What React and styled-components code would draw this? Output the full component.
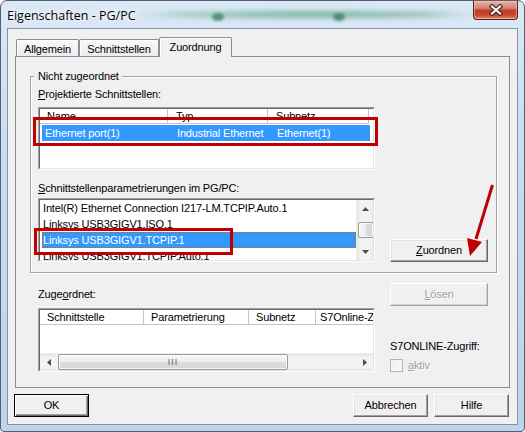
import React from "react";
import styled, { createGlobalStyle } from "styled-components";

const GlobalStyle = createGlobalStyle`
  html, body { margin: 0; padding: 0; background: #ffffff; }
  body {
    width: 525px;
    height: 432px;
    overflow: hidden;
    font-family: "Liberation Sans", Arial, sans-serif;
    font-size: 11px;
    letter-spacing: -0.15px;
    color: #000;
  }
  * { box-sizing: border-box; }
`;

const Stage = styled.div`
  position: relative;
  width: 525px;
  height: 432px;
`;

const Window = styled.div`
  width: 525px;
  height: 432px;
  border: 1px solid #53606f;
  border-radius: 7px 7px 4px 4px;
  background: linear-gradient(180deg, #dbe8f6 0%, #cadcf0 35%, #bed4ec 100%);
  display: flex;
  flex-direction: column;
  overflow: hidden;
`;

const TitleBar = styled.div`
  position: relative;
  height: 27px;
  flex: none;
  display: flex;
  align-items: flex-start;
  padding: 0 6px;
`;

const Glow = styled.span`
  position: absolute;
  left: ${(p) => p.$x}px;
  top: ${(p) => p.$y}px;
  width: ${(p) => p.$w}px;
  height: ${(p) => p.$h}px;
  border-radius: 50%;
  background: ${(p) => p.$bg};
  filter: blur(${(p) => p.$blur}px);
`;

const Title = styled.div`
  position: relative;
  padding-top: 6px;
  line-height: 17px;
  font-family: "Open Sans", "Liberation Sans", sans-serif;
  font-size: 12.5px;
  letter-spacing: 0;
  color: #000;
  text-shadow: 0 0 6px #fff, 0 0 10px #fff;
`;

const CloseButton = styled.div`
  margin-left: auto;
  width: 45px;
  height: 19px;
  display: flex;
  align-items: center;
  justify-content: center;
  border: 1px solid #5e2015;
  border-top: none;
  border-radius: 0 0 4px 4px;
  background: linear-gradient(
    180deg,
    #eab0a3 0%,
    #d98272 40%,
    #c43c24 52%,
    #c9462b 78%,
    #e08b6b 100%
  );
  box-shadow: inset 0 0 0 1px rgba(255, 220, 210, 0.45);
`;

const Client = styled.div`
  flex: 1;
  margin: 0 6px 6px 6px;
  border: 1px solid #8295aa;
  background: #f0f0f0;
  display: flex;
  flex-direction: column;
  padding: 8px 8px 0 6px;
`;

const TabStrip = styled.div`
  position: relative;
  z-index: 1;
  height: 20px;
  margin-bottom: -1px;
  display: flex;
  align-items: flex-end;
  padding-left: 2px;
`;

const Tab = styled.div`
  width: ${(p) => p.$w}px;
  height: ${(p) => (p.$active ? 20 : 17)}px;
  margin-bottom: ${(p) => (p.$active ? 0 : 1)}px;
  border: 1px solid #898c95;
  border-bottom: none;
  border-radius: 2px 2px 0 0;
  background: ${(p) =>
    p.$active ? "#f0f0f0" : "linear-gradient(180deg, #f8f8f8 0%, #ececec 100%)"};
  box-shadow: inset 1px 1px 0 #ffffff;
  text-align: center;
  padding-top: 3px;
  line-height: 13px;
  white-space: nowrap;
`;

const Panel = styled.div`
  height: 332px;
  margin: 0 -1px 0 1px;
  border: 1px solid #898c95;
  background: #f0f0f0;
  padding: 19px 12px 0 14px;
  display: flex;
  flex-direction: column;
`;

const GroupBox = styled.div`
  position: relative;
  border: 1px solid #a0a0a0;
  box-shadow: 1px 1px 0 #ffffff, inset 1px 1px 0 #ffffff;
  padding: 11px 8px 10px 7px;
  display: flex;
  flex-direction: column;
`;

const Legend = styled.div`
  position: absolute;
  left: 3px;
  top: -7px;
  padding: 0 3px 0 4px;
  line-height: 13px;
  background: #f0f0f0;
`;

const Label = styled.div`
  line-height: 13px;
  height: 13px;
  white-space: nowrap;
  margin-top: ${(p) => p.$mt || 0}px;
  color: ${(p) => (p.$disabled ? "#a0a0a0" : "#000")};
  text-shadow: ${(p) => (p.$disabled ? "1px 1px 0 #fff" : "none")};
`;

const Key = styled.span`
  text-decoration: underline;
`;

const Sunken = styled.div`
  width: 337px;
  height: ${(p) => p.$h}px;
  margin-top: ${(p) => p.$mt || 0}px;
  flex: none;
  border: 1px solid;
  border-color: #a0a0a0 #ffffff #ffffff #a0a0a0;
`;

const SunkenInner = styled.div`
  height: 100%;
  border: 1px solid;
  border-color: #696969 #e3e3e3 #e3e3e3 #696969;
  background: #ffffff;
  overflow: hidden;
  display: flex;
  flex-direction: ${(p) => (p.$row ? "row" : "column")};
`;

const HeaderRow = styled.div`
  display: flex;
  height: 15px;
  flex: none;
`;

const HeaderCell = styled.div`
  width: ${(p) => p.$w}px;
  flex: none;
  padding-left: ${(p) => p.$pad ?? 7}px;
  line-height: 14px;
  border-right: 1px solid #c5c5c5;
  border-bottom: 1px solid #c5c5c5;
  white-space: nowrap;
  overflow: hidden;
`;

const ItemRow = styled.div`
  display: flex;
  height: 16px;
  flex: none;
  width: ${(p) => (p.$w ? `${p.$w}px` : "auto")};
  margin: ${(p) => p.$mt || 0}px 0 0 2px;
  line-height: 16px;
  background: ${(p) => (p.$selected ? "#3399ff" : "transparent")};
  color: ${(p) => (p.$selected ? "#ffffff" : "#000000")};
  outline: ${(p) => (p.$focus ? "1px dotted #cc6600" : "none")};
  outline-offset: -1px;
  white-space: nowrap;
`;

const ItemCell = styled.div`
  width: ${(p) => (p.$w ? `${p.$w}px` : "auto")};
  flex: none;
  padding-left: ${(p) => p.$pad ?? 8}px;
  overflow: hidden;
`;

const Items = styled.div`
  flex: 1;
  display: flex;
  flex-direction: column;
  overflow: hidden;
`;

const EmptyBody = styled.div`
  flex: 1;
`;

const VScroll = styled.div`
  width: 17px;
  flex: none;
  display: flex;
  flex-direction: column;
  background: linear-gradient(90deg, #e6e6e6 0%, #f3f3f3 25%, #f3f3f3 75%, #ececec 100%);
  border-left: 1px solid #ececec;
`;

const HScroll = styled.div`
  height: 17px;
  flex: none;
  display: flex;
  background: linear-gradient(180deg, #e6e6e6 0%, #f3f3f3 25%, #f3f3f3 75%, #ececec 100%);
  border-top: 1px solid #ececec;
`;

const ArrowBox = styled.div`
  flex: none;
  display: flex;
  align-items: center;
  justify-content: center;
  ${(p) => (p.$h ? "width: 17px;" : "height: 17px;")}
`;

const Track = styled.div`
  flex: 1;
  display: flex;
  flex-direction: ${(p) => (p.$h ? "row" : "column")};
`;

const Thumb = styled.div`
  flex: none;
  ${(p) =>
    p.$h
      ? `width: ${p.$len}px; margin-left: ${p.$off}px; height: 100%;`
      : `height: ${p.$len}px; margin-top: ${p.$off}px; width: 100%; margin-left: 1px;`}
  border: 1px solid #9a9a9a;
  border-radius: 2px;
  background: ${(p) =>
    p.$h
      ? "linear-gradient(180deg, #f6f6f6 0%, #ececec 50%, #dcdcdc 51%, #d6d6d6 100%)"
      : "linear-gradient(90deg, #f6f6f6 0%, #ececec 50%, #dcdcdc 51%, #d6d6d6 100%)"};
  box-shadow: inset 0 0 0 1px rgba(255, 255, 255, 0.8);
  display: flex;
  align-items: center;
  justify-content: center;
`;

const Grip = styled.span`
  font-size: 9px;
  letter-spacing: 1px;
  color: #606060;
  line-height: 9px;
`;

const Row = styled.div`
  display: flex;
  margin-top: ${(p) => p.$mt || 0}px;
`;

const Column = styled.div`
  display: flex;
  flex-direction: column;
  width: ${(p) => p.$w}px;
  flex: none;
  margin-left: ${(p) => p.$ml || 0}px;
`;

const Button = styled.div`
  width: ${(p) => p.$w || 75}px;
  height: 23px;
  flex: none;
  margin-top: ${(p) => p.$mt || 0}px;
  margin-left: ${(p) => (p.$push ? "auto" : "0")};
  align-self: ${(p) => p.$align || "auto"};
  border: 1px solid;
  border-color: ${(p) =>
    p.$default ? "#000000" : p.$disabled ? "#ffffff #a0a0a0 #a0a0a0 #ffffff" : "#ffffff #696969 #696969 #ffffff"};
  box-shadow: ${(p) =>
    p.$default
      ? "inset 1px 1px 0 #ffffff, inset -1px -1px 0 #696969, inset -2px -2px 0 #a0a0a0"
      : p.$disabled
      ? "inset -1px -1px 0 #d4d4d4"
      : "inset -1px -1px 0 #a0a0a0, inset 1px 1px 0 #e3e3e3"};
  background: #f0f0f0;
  display: flex;
  align-items: center;
  justify-content: center;
  line-height: 13px;
  color: ${(p) => (p.$disabled ? "#a0a0a0" : "#000")};
  text-shadow: ${(p) => (p.$disabled ? "1px 1px 0 #ffffff" : "none")};
`;

const ButtonRow = styled.div`
  display: flex;
  gap: 6px;
  margin-top: 6px;
`;

const CheckRow = styled.div`
  display: flex;
  align-items: center;
  gap: 5px;
  margin-top: 6px;
  height: 13px;
`;

const CheckBox = styled.span`
  width: 13px;
  height: 13px;
  flex: none;
  border: 1px solid #b4b4b4;
  background: linear-gradient(135deg, #eeeeee 0%, #fafafa 100%);
  box-shadow: inset 0 0 0 1px #f7f7f7;
`;

const Overlay = styled.svg`
  position: absolute;
  left: 0;
  top: 0;
  pointer-events: none;
`;

const Tri = ({ dir }) => {
  const pts = {
    up: "0,4 3.5,0 7,4",
    down: "0,0 7,0 3.5,4",
    left: "4,0 4,7 0,3.5",
    right: "0,0 0,7 4,3.5",
  }[dir];
  const horiz = dir === "left" || dir === "right";
  return (
    <svg width={horiz ? 4 : 7} height={horiz ? 7 : 4} viewBox={horiz ? "0 0 4 7" : "0 0 7 4"}>
      <polygon points={pts} fill="#4d4d4d" />
    </svg>
  );
};

const CloseGlyph = () => (
  <svg width="14" height="12" viewBox="0 0 14 12">
    <g strokeLinecap="square">
      <path d="M3 2.5 L11 9.5 M11 2.5 L3 9.5" stroke="#3a2a2a" strokeWidth="4.4" />
      <path d="M3 2.5 L11 9.5 M11 2.5 L3 9.5" stroke="#ffffff" strokeWidth="2.2" />
    </g>
  </svg>
);

const assignedCols = [
  { label: "Schnittstelle", w: 104 },
  { label: "Parametrierung", w: 105 },
  { label: "Subnetz", w: 67 },
  { label: "S7Online-Zugriff", w: 100, pad: 4 },
];

const params = [
  "Intel(R) Ethernet Connection I217-LM.TCPIP.Auto.1",
  "Linksys USB3GIGV1.ISO.1",
  "Linksys USB3GIGV1.TCPIP.1",
  "Linksys USB3GIGV1.TCPIP.Auto.1",
];

export default function App() {
  return (
    <>
      <GlobalStyle />
      <Stage>
        <Window>
          <TitleBar>
            <Glow $x={128} $y={10} $w={350} $h={7} $blur={2.5} $bg="linear-gradient(90deg, rgba(255,255,255,0) 0%, rgba(110,180,145,0.5) 15%, rgba(70,150,110,0.6) 50%, rgba(90,165,125,0.55) 85%, rgba(255,255,255,0) 100%)" />
            <Glow $x={211} $y={12} $w={12} $h={8} $blur={1.5} $bg="rgba(40,120,80,0.7)" />
            <Glow $x={332} $y={12} $w={12} $h={8} $blur={1.5} $bg="rgba(40,120,80,0.7)" />
            <Title>Eigenschaften - PG/PC</Title>
            <CloseButton>
              <CloseGlyph />
            </CloseButton>
          </TitleBar>

          <Client>
            <TabStrip>
              <Tab $w={63}>Allgemein</Tab>
              <Tab $w={80}>Schnittstellen</Tab>
              <Tab $w={73} $active>
                Zuordnung
              </Tab>
            </TabStrip>

            <Panel>
              <GroupBox>
                <Legend>Nicht zugeordnet</Legend>
                <Label>
                  <Key>P</Key>rojektierte Schnittstellen:
                </Label>
                <Sunken $h={63} $mt={6}>
                  <SunkenInner>
                    <HeaderRow>
                      <HeaderCell $w={128}>Name</HeaderCell>
                      <HeaderCell $w={100} $pad={8}>Typ</HeaderCell>
                      <HeaderCell $w={101} $pad={8}>Subnetz</HeaderCell>
                    </HeaderRow>
                    <ItemRow $selected $mt={1} $w={328}>
                      <ItemCell $w={126} $pad={3}>Ethernet port(1)</ItemCell>
                      <ItemCell $w={100} $pad={9}>Industrial Ethernet</ItemCell>
                      <ItemCell $w={101} $pad={9}>Ethernet(1)</ItemCell>
                    </ItemRow>
                  </SunkenInner>
                </Sunken>

                <Label $mt={12}>
                  <Key>S</Key>chnittstellenparametrierungen im PG/PC:
                </Label>
                <Row $mt={3}>
                  <Sunken $h={64}>
                    <SunkenInner $row>
                      <Items>
                        {params.map((p, i) => (
                          <ItemRow key={p} $selected={i === 2} $focus={i === 2}>
                            <ItemCell $pad={1}>{p}</ItemCell>
                          </ItemRow>
                        ))}
                      </Items>
                      <VScroll>
                        <ArrowBox>
                          <Tri dir="up" />
                        </ArrowBox>
                        <Track>
                          <Thumb $len={16} $off={5} />
                        </Track>
                        <ArrowBox>
                          <Tri dir="down" />
                        </ArrowBox>
                      </VScroll>
                    </SunkenInner>
                  </Sunken>
                  <Button $w={98} $push $align="flex-end">
                    <span>
                      <Key>Z</Key>uordnen
                    </span>
                  </Button>
                </Row>
              </GroupBox>

              <Row>
                <Column $w={337} $ml={8}>
                  <Label $mt={15}>
                    Zuge<Key>o</Key>rdnet:
                  </Label>
                  <Sunken $h={64} $mt={7}>
                    <SunkenInner>
                      <HeaderRow>
                        {assignedCols.map((c) => (
                          <HeaderCell key={c.label} $w={c.w} $pad={c.pad ?? 7}>
                            {c.label}
                          </HeaderCell>
                        ))}
                      </HeaderRow>
                      <EmptyBody />
                      <HScroll>
                        <ArrowBox $h>
                          <Tri dir="left" />
                        </ArrowBox>
                        <Track $h>
                          <Thumb $h $len={230} $off={1}>
                            <Grip>III</Grip>
                          </Thumb>
                        </Track>
                        <ArrowBox $h>
                          <Tri dir="right" />
                        </ArrowBox>
                      </HScroll>
                    </SunkenInner>
                  </Sunken>
                </Column>

                <Column $w={98} $ml={15}>
                  <Button $w={98} $mt={10} $disabled>
                    <span>
                      <Key>L</Key>ösen
                    </span>
                  </Button>
                  <Label $mt={34}>S7ONLINE-Zugriff:</Label>
                  <CheckRow>
                    <CheckBox />
                    <Label $disabled>
                      <Key>a</Key>ktiv
                    </Label>
                  </CheckRow>
                </Column>
              </Row>
            </Panel>

            <ButtonRow>
              <Button $default>OK</Button>
              <Button $push>Abbrechen</Button>
              <Button>Hilfe</Button>
            </ButtonRow>
          </Client>
        </Window>

        <Overlay width="525" height="432" viewBox="0 0 525 432">
          <rect x="34.5" y="118.5" width="342" height="26" fill="none" stroke="#c00000" strokeWidth="3" />
          <rect x="35.5" y="229.5" width="196" height="24" fill="none" stroke="#c00000" strokeWidth="3" />
          <line x1="492.5" y1="185" x2="476" y2="239" stroke="#c00000" strokeWidth="3" />
          <polygon points="470,256 467,238 482,242" fill="#c00000" />
        </Overlay>
      </Stage>
    </>
  );
}
